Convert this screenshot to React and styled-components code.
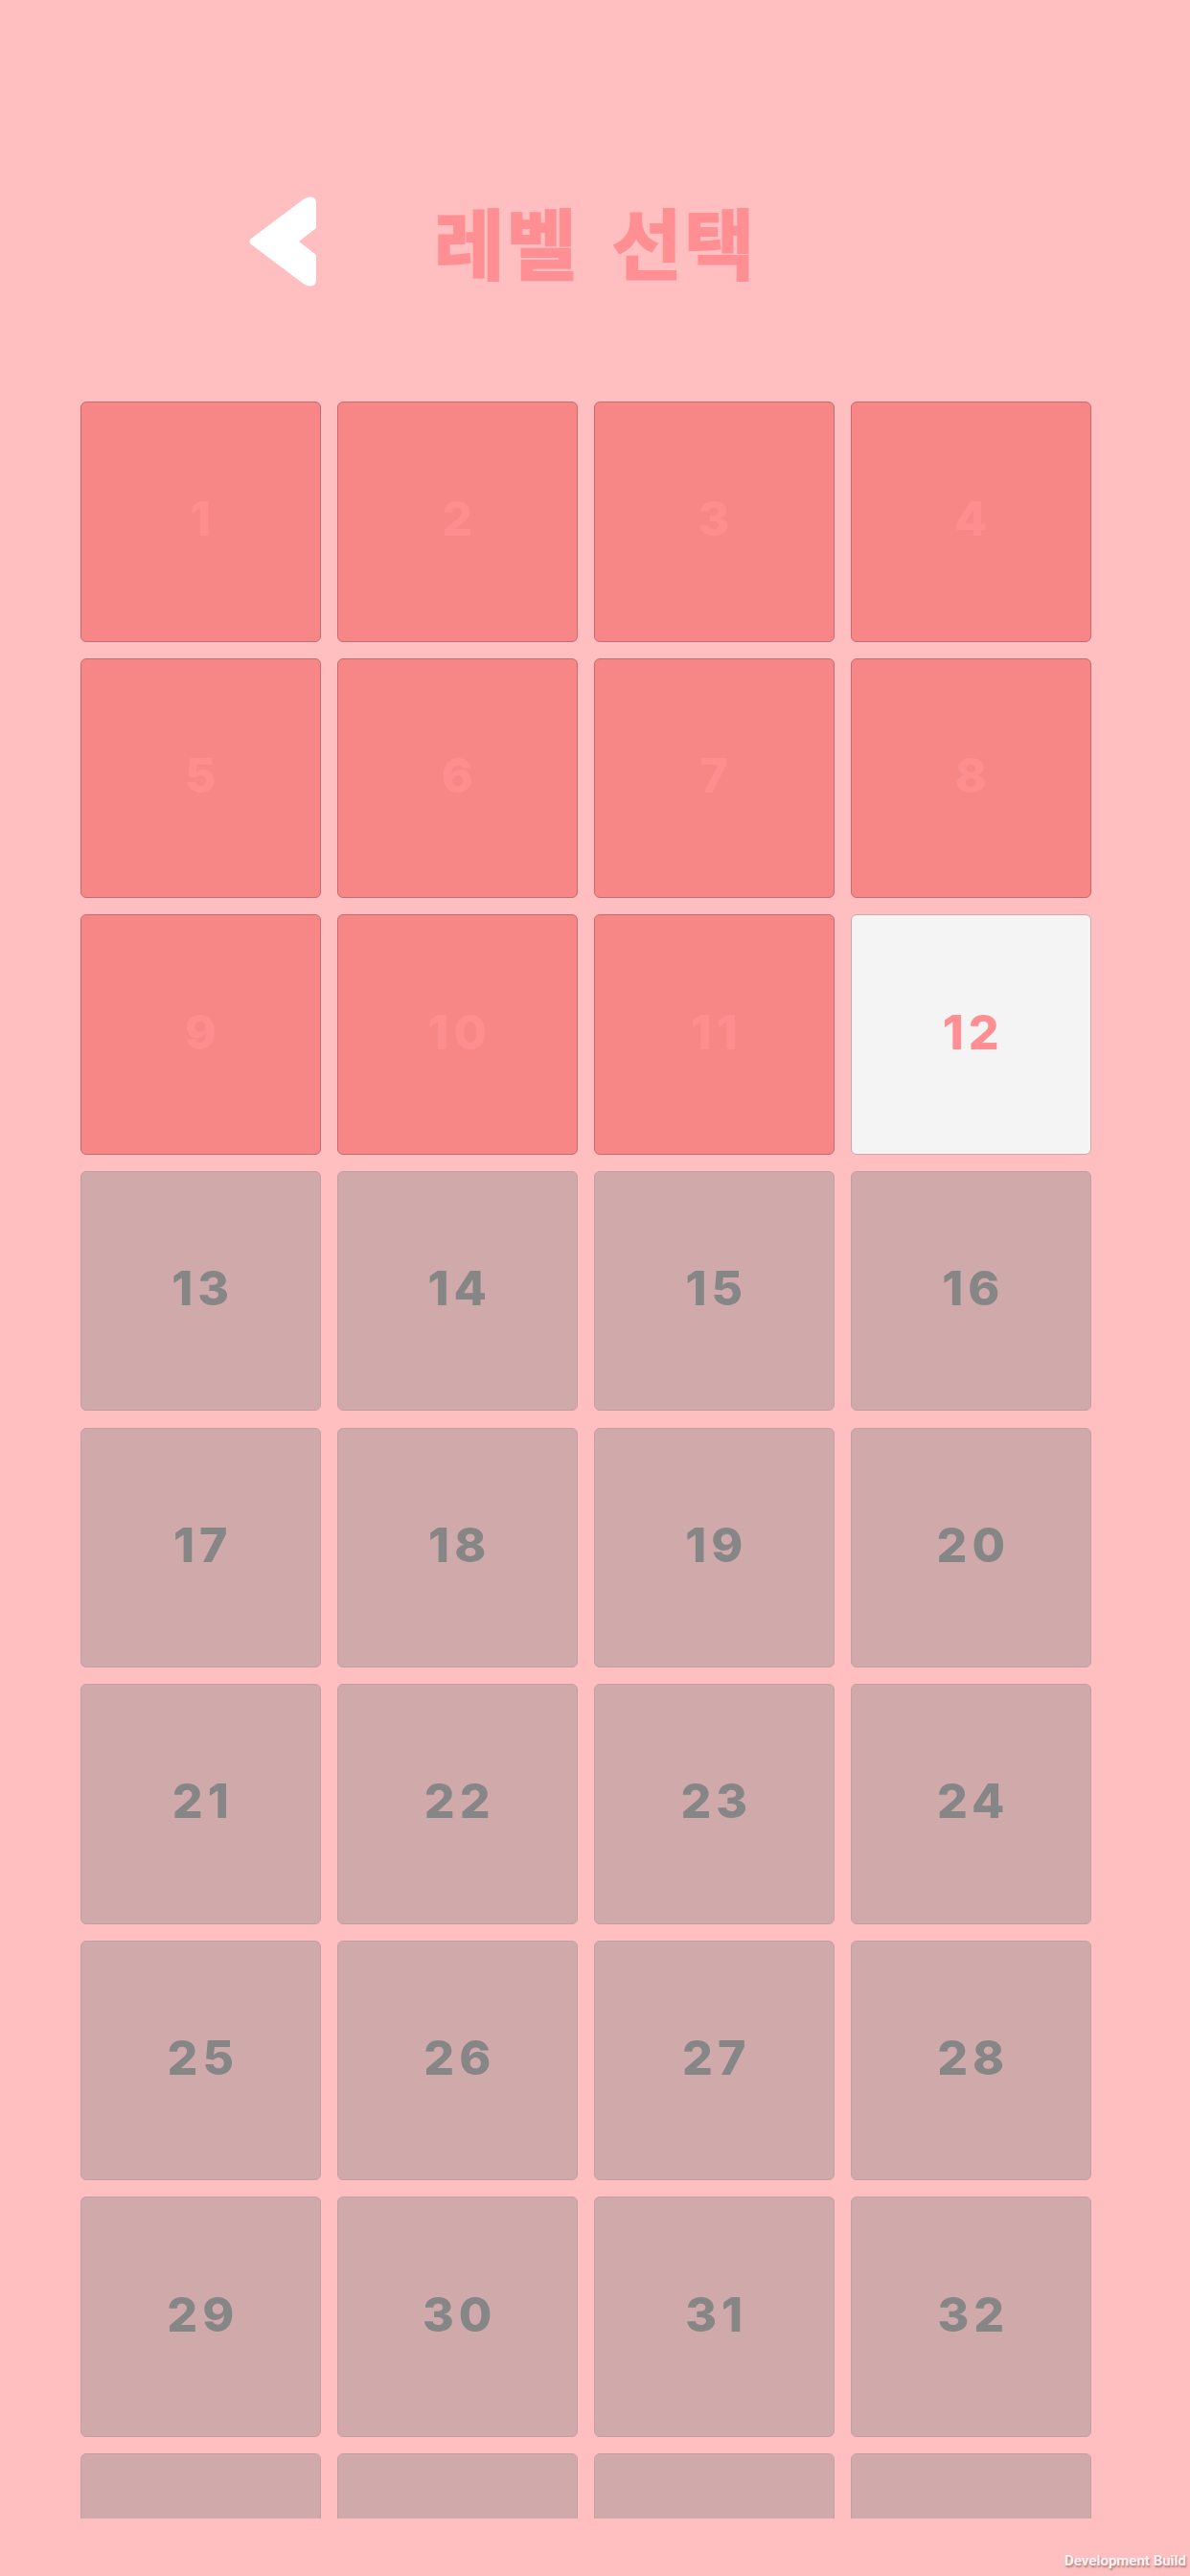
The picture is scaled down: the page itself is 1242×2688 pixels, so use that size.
import React from 'react';
import styled, { createGlobalStyle } from 'styled-components';

const TOTAL_LEVELS = 36;
const CURRENT_LEVEL = 12;
// the last row is cut by the list before its numbers come into view
const LAST_LABELLED_LEVEL = 32;

const GlobalStyle = createGlobalStyle`
	html, body {
		margin: 0;
		padding: 0;
		background: #ffbfc0;
	}
`;

const Screen = styled.div`
	position: relative;
	width: 1242px;
	height: 2688px;
	overflow: hidden;
	background: #ffbfc0;
	font-family: Inter, "Noto Sans CJK KR", sans-serif;
`;

const Header = styled.header`
	height: 419px;
	box-sizing: border-box;
	padding: 205px 0 0 260px;
	display: flex;
	align-items: flex-start;
	gap: 122px;
`;

const BackButton = styled.button`
	padding: 0;
	border: none;
	background: none;
	display: block;
	width: 71px;
	height: 94px;
`;

const Title = styled.h1`
	margin: 0;
	margin-top: -11px;
	color: #ff8f92;
	font-family: "Noto Sans CJK KR", sans-serif;
	font-size: 80px;
	line-height: 112px;
	font-weight: 700;
	letter-spacing: 2px;
	word-spacing: 14px;
	white-space: nowrap;
	-webkit-text-stroke: 2px #ff8f92;
`;

const ListViewport = styled.div`
	height: 2209px;
	overflow: hidden;
	padding-left: 84px;
`;

const LevelGrid = styled.div`
	display: grid;
	grid-template-columns: repeat(4, 250.5px);
	grid-auto-rows: 250.5px;
	column-gap: 17.5px;
	row-gap: 17.15px;
`;

const tileColors = {
	cleared: { bg: '#f68786', border: '#c46c71', text: '#fd8e8f' },
	current: { bg: '#f4f4f4', border: '#cfa6aa', text: '#ff8f92' },
	locked: { bg: '#d0aaaa', border: '#c49fa1', text: '#868686' },
};

const LevelTile = styled.div`
	box-sizing: border-box;
	display: flex;
	align-items: center;
	justify-content: center;
	padding: 0 0 6px 5px;
	border: 1.5px solid ${(props) => tileColors[props.$status].border};
	border-radius: 6px;
	background: ${(props) => tileColors[props.$status].bg};
	color: ${(props) => tileColors[props.$status].text};
	font-size: 50px;
	font-weight: 800;
	letter-spacing: 5px;
`;

const BuildTag = styled.div`
	position: absolute;
	right: 4px;
	bottom: 7px;
	color: #fdf3f3;
	font-family: Roboto, sans-serif;
	font-size: 15px;
	font-weight: 700;
	line-height: 18px;
	text-shadow: 1px 2px 2px rgba(90, 60, 60, 0.5);
`;

function levelStatus(level) {
	if (level < CURRENT_LEVEL) return 'cleared';
	if (level === CURRENT_LEVEL) return 'current';
	return 'locked';
}

export default function App() {
	const levels = Array.from({ length: TOTAL_LEVELS }, (_, i) => i + 1);
	return (
		<Screen>
			<GlobalStyle />
			<Header>
				<BackButton aria-label="back">
					<svg width="71" height="94" viewBox="0 0 71 94">
						<path
							d="M2 44 L58 2 Q70 -3 70 8 L70 33 L52 47 L70 61 L70 86 Q70 97 58 92 L2 50 Q-1 47 2 44 Z"
							fill="#ffffff"
						/>
					</svg>
				</BackButton>
				<Title>레벨 선택</Title>
			</Header>
			<ListViewport>
				<LevelGrid>
					{levels.map((level) => (
						<LevelTile key={level} $status={levelStatus(level)}>
							{level <= LAST_LABELLED_LEVEL && level}
						</LevelTile>
					))}
				</LevelGrid>
			</ListViewport>
			<BuildTag>Development Build</BuildTag>
		</Screen>
	);
}
